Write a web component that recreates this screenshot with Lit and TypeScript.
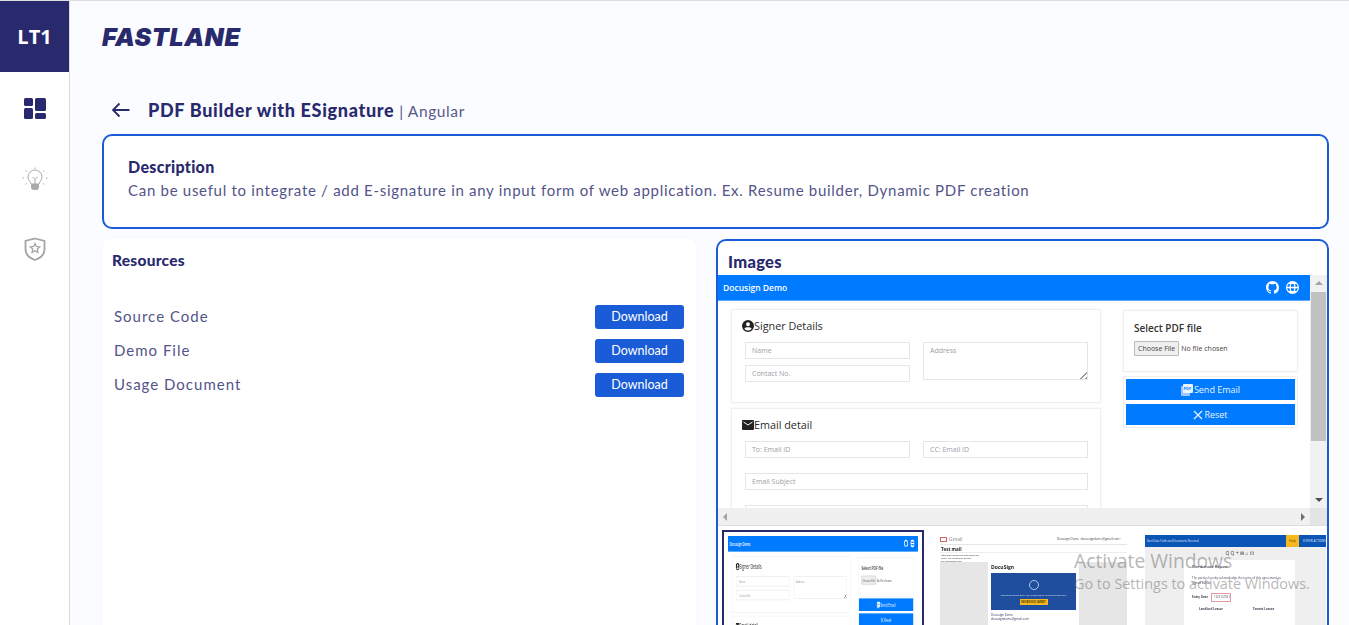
import { LitElement, css, html } from "lit";
import { customElement } from "lit/decorators.js";

const GITHUB_PATH =
  "M8 0C3.58 0 0 3.58 0 8c0 3.54 2.29 6.53 5.47 7.59.4.07.55-.17.55-.38 0-.19-.01-.82-.01-1.49-2.01.37-2.53-.49-2.69-.94-.09-.23-.48-.94-.82-1.13-.28-.15-.68-.52-.01-.53.63-.01 1.08.58 1.23.82.72 1.21 1.87.87 2.33.66.07-.52.28-.87.51-1.07-1.78-.2-3.64-.89-3.64-3.95 0-.87.31-1.59.82-2.15-.08-.2-.36-1.02.08-2.12 0 0 .67-.21 2.2.82.64-.18 1.32-.27 2-.27.68 0 1.36.09 2 .27 1.53-1.04 2.2-.82 2.2-.82.44 1.1.16 1.92.08 2.12.51.56.82 1.27.82 2.15 0 3.07-1.87 3.75-3.65 3.95.29.25.54.73.54 1.48 0 1.07-.01 1.93-.01 2.2 0 .21.15.46.55.38A8.013 8.013 0 0016 8c0-4.42-3.58-8-8-8z";

// the docusign demo page shown inside the image viewer (also used for the first thumbnail)
@customElement("demo-view")
export class DemoView extends LitElement {
  static styles = css`
    :host {
      display: block;
      width: 592px;
      background: #fff;
      font-family: "Open Sans", sans-serif;
      color: #333;
    }
    .bar {
      height: 25px;
      background: #007bff;
      border-bottom: 1px solid #5aa9ff;
      display: flex;
      align-items: center;
      justify-content: space-between;
      padding: 0 11px 0 5px;
      color: #fff;
      font-size: 8.5px;
      font-weight: 600;
    }
    .bar-icons {
      display: flex;
      gap: 7px;
    }
    .cols {
      display: grid;
      grid-template-columns: 370px 175px;
      gap: 22px;
      padding: 8px 12px 0 13px;
    }
    .stack {
      display: flex;
      flex-direction: column;
      gap: 5px;
    }
    .panel {
      border: 1px solid #efefef;
      box-shadow: 0 0 2px #f2f2f2;
      padding: 3px 13px 0 10px;
    }
    .signer {
      height: 94px;
      box-sizing: border-box;
    }
    .email {
      height: 130px;
      box-sizing: border-box;
    }
    h4 {
      margin: 0 0 4px;
      height: 25px;
      display: flex;
      align-items: center;
      gap: 0;
      font-size: 10.800px;
      font-weight: 500;
      color: #2b2b2b;
    }
    .fields {
      display: grid;
      grid-template-columns: 165px 165px;
      gap: 6px 13px;
      padding-left: 3px;
    }
    .field {
      height: 17px;
      border: 1px solid #e6e6e6;
      box-sizing: border-box;
      font-size: 7px;
      color: #9aa0a6;
      padding: 3px 6px;
      line-height: 10px;
    }
    .area {
      grid-column: 2;
      grid-row: 1 / span 2;
      height: 38px;
      background: linear-gradient(135deg, transparent 96%, #999 96%, #999 97%, transparent 97%, transparent 98.500%, #999 98.500%);
    }
    .email .fields {
      gap: 15px 13px;
    }
    .wide {
      grid-column: 1 / span 2;
    }
    .side {
      gap: 4px;
      padding-top: 1px;
    }
    .pick {
      height: 62px;
      box-sizing: border-box;
      padding: 10px 10px 0;
    }
    .pick h5 {
      margin: 0 0 6px;
      font-size: 10px;
      font-weight: 600;
    }
    .file {
      display: flex;
      align-items: center;
      gap: 2px;
      font-size: 7px;
      color: #444;
    }
    .file span:first-child {
      border: 1px solid #bbb;
      background: #efefef;
      border-radius: 1px;
      padding: 2px 3px;
    }
    .actions {
      border: 1px solid #efefef;
      padding: 2px;
      display: flex;
      flex-direction: column;
      gap: 4px;
    }
    .action {
      height: 21px;
      background: #007bff;
      color: #e9f3ff;
      font-size: 9px;
      display: flex;
      align-items: center;
      justify-content: center;
      gap: 1px;
    }
    .pdf-mark {
      font-family: "Open Sans", sans-serif;
      font-size: 4px;
      font-weight: 700;
      fill: #007bff;
    }
  `;

  render() {
    return html`
      <div class="bar">
        <span>Docusign Demo</span>
        <span class="bar-icons">
          <svg width="13" height="13" viewBox="0 0 16 16" fill="#fff"><path d=${GITHUB_PATH} /></svg>
          <svg width="13" height="13" viewBox="0 0 16 16" fill="#fff">
            <path d="M8 0a8 8 0 1 0 0 16A8 8 0 0 0 8 0zM1.600 7.200c.1-1.300.6-2.500 1.400-3.400h1.900c-.3 1-.5 2.200-.5 3.400H1.600zm0 1.600h2.800c0 1.200.2 2.400.5 3.400H3a6.400 6.400 0 0 1-1.400-3.400zM6 7.200c0-1.300.2-2.500.6-3.400h2.800c.4.900.6 2.100.6 3.400H6zm0 1.600h4c0 1.300-.2 2.500-.6 3.400H6.600c-.4-.9-.6-2.100-.6-3.400zm5.600-1.600c0-1.200-.2-2.400-.5-3.400H13c.8.900 1.300 2.100 1.400 3.400h-2.800zm0 1.600h2.800a6.400 6.400 0 0 1-1.400 3.400h-1.900c.3-1 .5-2.200.5-3.400z" />
          </svg>
        </span>
      </div>
      <div class="cols">
        <div class="stack">
          <div class="panel signer">
            <h4>
              <svg width="12" height="12" viewBox="0 0 16 16" fill="#222">
                <path d="M8 0a8 8 0 1 0 0 16A8 8 0 0 0 8 0zm0 3a2.600 2.600 0 1 1 0 5.200A2.600 2.600 0 0 1 8 3zm0 11c-2 0-3.700-.9-4.800-2.400C3.800 10.300 6 9.700 8 9.700s4.200.6 4.800 1.900C11.700 13.100 10 14 8 14z" />
              </svg>
              Signer Details
            </h4>
            <div class="fields">
              <div class="field">Name</div>
              <div class="field area">Address</div>
              <div class="field">Contact No.</div>
            </div>
          </div>
          <div class="panel email">
            <h4>
              <svg width="12" height="10" viewBox="0 0 12 10">
                <rect width="12" height="10" rx="1" fill="#222" />
                <path d="M1.500 2 6 5l4.500-3" fill="none" stroke="#fff" stroke-width="1" />
              </svg>
              Email detail
            </h4>
            <div class="fields">
              <div class="field">To: Email ID</div>
              <div class="field">CC: Email ID</div>
              <div class="field wide">Email Subject</div>
              <div class="field wide"></div>
            </div>
          </div>
        </div>
        <div class="stack side">
          <div class="panel pick">
            <h5>Select PDF file</h5>
            <div class="file"><span>Choose File</span><span>No file chosen</span></div>
          </div>
          <div class="actions">
            <div class="action">
              <svg width="12" height="12" viewBox="0 0 12 12">
                <rect x="0" y="2" width="9" height="10" rx="1" fill="#9cc8ff" />
                <rect x="2" y="0" width="10" height="9" rx="1" fill="#e9f3ff" />
                <text class="pdf-mark" x="2.600" y="6">PDF</text>
              </svg>
              Send Email
            </div>
            <div class="action">
              <svg width="10" height="10" viewBox="0 0 10 10" stroke="#e9f3ff" stroke-width="1.200">
                <path d="M1 1l8 8M9 1l-8 8" />
              </svg>
              Reset
            </div>
          </div>
        </div>
      </div>
    `;
  }
}

@customElement("app-root")
export class AppRoot extends LitElement {
  static styles = css`
    :host {
      display: block;
      height: 625px;
      overflow: hidden;
      position: relative;
      background: #fbfcff;
      font-family: Lato, "Open Sans", sans-serif;
      color: #29296e;
      box-sizing: border-box;
      border-top: 1px solid #dedede;
    }
    .shell {
      display: flex;
      height: 100%;
    }
    .rail {
      flex: 0 0 70px;
      box-sizing: border-box;
      background: #fff;
      border-right: 1px solid #d9d9d9;
      display: flex;
      flex-direction: column;
      align-items: center;
    }
    .brand {
      align-self: stretch;
      height: 71px;
      background: #29296e;
      color: #fff;
      font-family: "Open Sans", sans-serif;
      font-size: 20px;
      font-weight: 700;
      display: flex;
      align-items: center;
      justify-content: center;
    }
    .rail-icons {
      display: flex;
      flex-direction: column;
      align-items: center;
      gap: 48px;
      padding-top: 26px;
    }
    .shield {
      margin-top: -4px;
    }
    .main {
      flex: 1;
      min-width: 0;
      padding: 0 20px 0 32px;
    }
    .logo {
      height: 71px;
      box-sizing: border-box;
      padding-top: 2px;
      display: flex;
      align-items: center;
      font-family: Inter, Roboto, sans-serif;
      font-style: italic;
      font-weight: 900;
      font-size: 25px;
      letter-spacing: 0.55px;
      color: #29296e;
      margin-top: -1px;
    }
    .title-row {
      display: flex;
      align-items: center;
      gap: 17px;
      height: 63px;
      padding: 15px 0 0 9px;
      box-sizing: border-box;
    }
    .title {
      font-size: 18px;
      letter-spacing: 0.68px;
      font-weight: 900;
    }
    .tag {
      font-size: 15.500px;
      font-weight: 400;
      letter-spacing: 0.6px;
      color: #5a5a88;
    }
    .desc {
      height: 95px;
      box-sizing: border-box;
      border: 2px solid #1a5cd7;
      border-radius: 10px;
      background: #fff;
      padding: 21px 24px;
    }
    .desc h3 {
      margin: 0 0 4px;
      font-size: 16px;
      line-height: 20px;
      font-weight: 900;
      letter-spacing: 0.3px;
    }
    .desc p {
      margin: 0;
      font-size: 15px;
      line-height: 19px;
      letter-spacing: 0.71px;
      color: #54548a;
    }
    .cols {
      display: grid;
      grid-template-columns: 594px 613px;
      gap: 20px;
      margin-top: 9px;
    }
    .card {
      background: #fff;
      border-radius: 10px;
      box-shadow: 0 0 3px #f4f6fb;
      height: 500px;
      padding: 12px 12px 0 10px;
      box-sizing: border-box;
    }
    .card h3 {
      margin: 0 0 30px;
      font-size: 15.500px;
      line-height: 20px;
      font-weight: 900;
      letter-spacing: 0.25px;
    }
    .row {
      display: flex;
      align-items: center;
      justify-content: space-between;
      height: 34px;
      padding-left: 2px;
      font-size: 15px;
      letter-spacing: 1px;
      color: #54548a;
    }
    .row span {
      padding-bottom: 2px;
    }
    .download {
      width: 89px;
      height: 24px;
      border: 0;
      border-radius: 3px;
      background: #1a5cd7;
      color: #fff;
      font-family: inherit;
      font-size: 12.500px;
      letter-spacing: 0;
      padding: 0 0 1px;
    }
    .images {
      margin-top: 1px;
      height: 500px;
      box-sizing: border-box;
      border: 2px solid #1a5cd7;
      border-radius: 10px;
      background: #fff;
      overflow: hidden;
    }
    .images h3 {
      margin: 0;
      padding: 10px 10px 0;
      height: 34px;
      box-sizing: border-box;
      font-size: 16.500px;
      line-height: 22px;
      font-weight: 900;
      letter-spacing: 0.3px;
    }
    .viewer {
      display: grid;
      grid-template-columns: 592px 17px;
      grid-template-rows: 233px 17px;
      border-bottom: 1px solid #dedede;
    }
    .shot {
      overflow: hidden;
    }
    .vbar {
      background: #f1f1f1;
      display: flex;
      flex-direction: column;
      align-items: center;
      justify-content: space-between;
      position: relative;
    }
    .vthumb {
      position: absolute;
      top: 17px;
      left: 1px;
      width: 15px;
      height: 149px;
      background: #c1c1c1;
    }
    .hbar {
      background: #f0f0f0;
      display: flex;
      align-items: center;
      justify-content: space-between;
      padding: 0 5px;
    }
    .corner {
      background: #e4e4e4;
    }
    .arrow {
      width: 0;
      height: 0;
      border: 4px solid transparent;
    }
    .up {
      border-bottom-color: #a3a3a3;
      border-top-width: 0;
      margin-top: 6px;
    }
    .down {
      border-top-color: #505050;
      border-bottom-width: 0;
      margin-bottom: 6px;
    }
    .left {
      border-right-color: #a3a3a3;
      border-left-width: 0;
    }
    .right {
      border-left-color: #707070;
      border-right-width: 0;
    }
    .thumbs {
      display: grid;
      grid-template-columns: 202px 188px 184px;
      column-gap: 15px;
      padding: 4px 0 0 4px;
      height: 110px;
    }
    .thumb {
      height: 110px;
      overflow: hidden;
      box-sizing: border-box;
      filter: blur(0.5px);
    }
    .thumb.active {
      border: 2px solid #29296e;
      padding: 4px;
      filter: none;
    }
    /* the thumbnail image is squeezed, not scaled evenly */
    .thumb.active demo-view {
      transform: scale(0.321, 0.6);
      transform-origin: 0 0;
      filter: blur(0.7px);
    }
    .gm {
      padding: 4px 0 0 1px;
      font-family: "Open Sans", sans-serif;
      color: #444;
      background: #fff;
    }
    .gm-head {
      display: flex;
      justify-content: space-between;
      align-items: center;
      font-size: 3px;
      padding: 0 6px 0 0;
      border-bottom: 1px solid #e6e6e6;
      height: 10px;
    }
    .gm-logo {
      display: flex;
      align-items: center;
      gap: 2px;
      font-size: 5px;
      color: #888;
    }
    .gm-logo i {
      width: 7px;
      height: 5px;
      border: 1px solid #d9655b;
      box-sizing: border-box;
    }
    .gm-sub {
      font-size: 4.500px;
      font-weight: 700;
      padding: 2px 1px 0;
      line-height: 5px;
      color: #222;
    }
    .gm-meta {
      font-size: 2.500px;
      line-height: 3px;
      padding: 1px 1px 0;
      border-top: 1px solid #eee;
      height: 10px;
      box-sizing: border-box;
      overflow: hidden;
      color: #333;
    }
    .gm-body {
      background: #e6e6e6;
      height: 70px;
      padding: 0 48px;
    }
    .gm-mail {
      background: #fff;
      height: 70px;
      padding: 2px 3px;
      font-size: 5px;
      line-height: 7px;
      font-weight: 700;
      color: #222;
    }
    .gm-box {
      height: 37px;
      margin-top: 2px;
      background: #1f4e9f;
      display: flex;
      flex-direction: column;
      align-items: center;
      justify-content: flex-end;
      gap: 2px;
      padding-bottom: 5px;
      box-sizing: border-box;
      color: #dfe8f6;
      font-size: 2.500px;
      line-height: 3px;
      font-weight: 400;
    }
    .gm-ring {
      width: 10px;
      height: 10px;
      margin-bottom: 2px;
      border-radius: 50%;
      border: 1px solid #b8c9e6;
      box-sizing: border-box;
    }
    .gm-btn {
      width: 28px;
      height: 6px;
      background: #f5b81e;
      color: #4a3b00;
      font-size: 2.500px;
      line-height: 6px;
      text-align: center;
      font-weight: 700;
    }
    .gm-foot {
      font-size: 3px;
      line-height: 4px;
      padding-top: 3px;
      color: #335;
      font-weight: 400;
    }
    .pdf {
      margin-top: 5px;
      margin-left: 3px;
      background: #efefef;
      height: 105px;
      font-family: "Open Sans", sans-serif;
    }
    .pdf-head {
      height: 12px;
      background: #0b55b7;
      color: #dce8f8;
      font-size: 2.600px;
      display: flex;
      align-items: center;
      justify-content: space-between;
      padding-left: 2px;
    }
    .pdf-head b {
      display: flex;
      align-items: center;
      gap: 4px;
      height: 100%;
      font-weight: 400;
      font-size: 3px;
    }
    .pdf-head em {
      background: #f5b81e;
      color: #4a3b00;
      width: 13px;
      height: 100%;
      text-align: center;
      line-height: 12px;
      font-style: normal;
    }
    .pdf-tools {
      height: 13px;
      text-align: center;
      font-size: 5px;
      line-height: 13px;
      color: #444;
      padding-left: 8px;
    }
    .pdf-page {
      margin-left: 39px;
      width: 111px;
      height: 80px;
      background: #fff;
      padding: 4px 8px;
      box-sizing: border-box;
      font-size: 3px;
      line-height: 5px;
      color: #445;
    }
    .pdf-page h6 {
      margin: 0 0 7px;
      font-size: 4px;
      line-height: 5px;
      font-weight: 600;
    }
    .pdf-date {
      display: flex;
      align-items: center;
      gap: 3px;
      margin-top: 7px;
      font-weight: 700;
    }
    .pdf-date span {
      border: 1px solid #e39aa2;
      padding: 1px 2px;
      width: 14px;
      font-weight: 400;
    }
    .pdf-names {
      display: flex;
      gap: 30px;
      margin: 5px 0 0 7px;
      font-weight: 700;
    }
    .activate {
      position: absolute;
      left: 1074px;
      top: 548px;
      font-family: "Open Sans", sans-serif;
      color: rgba(110, 110, 110, 0.5);
      pointer-events: none;
    }
    .activate div:first-child {
      font-size: 19.300px;
      line-height: 24px;
    }
    .activate div:last-child {
      font-size: 14.400px;
      line-height: 22px;
    }
  `;

  private resources = ["Source Code", "Demo File", "Usage Document"];

  render() {
    return html`
      <div class="shell">
        <nav class="rail">
          <div class="brand">LT1</div>
          <div class="rail-icons">
            <svg width="22" height="21" viewBox="0 0 22 21" fill="#29296e">
              <rect x="0" y="0" width="9" height="8" rx="1.500" />
              <rect x="0" y="10" width="9" height="11" rx="1.500" />
              <rect x="11" y="0" width="11" height="13" rx="1.500" />
              <rect x="11" y="15" width="11" height="6" rx="1.500" />
            </svg>
            <svg width="26" height="26" viewBox="0 0 26 26" fill="none" stroke="#a9a9a9" stroke-width="1">
              <path d="M9 17c0-2-3-3.500-3-7a7 7 0 0 1 14 0c0 3.500-3 5-3 7z" />
              <path d="M10.500 10l2.500 2.500 2.500-2.500M13 12.500V17" />
              <path d="M9.500 17.500h7v3a2 2 0 0 1-2 2h-3a2 2 0 0 1-2-2z" fill="#a9a9a9" />
              <path d="M13 .5v1.500M3.500 3.500l1.200 1.200M22.500 3.500l-1.200 1.200M.5 11H2M24 11h1.500M3.500 17.500l1.200-1.200M22.500 17.500l-1.200-1.200" />
            </svg>
            <svg class="shield" width="22" height="24" viewBox="0 0 22 24" fill="none">
              <path d="M11 1.500 20.500 4v8.500c0 5-4 8.500-9.500 10.500C5.500 21 1.500 17.500 1.500 12.500V4z" stroke="#a4a4a4" stroke-width="1.800" />
              <path d="M11 6.500l1.400 3 3.300.4-2.400 2.200.6 3.300-2.900-1.600-2.900 1.600.6-3.300-2.400-2.200 3.300-.4z" stroke="#a4a4a4" stroke-width="1.300" />
            </svg>
          </div>
        </nav>
        <main class="main">
          <div class="logo">FASTLANE</div>
          <div class="title-row">
            <svg width="20" height="16" viewBox="0 0 20 16" fill="none" stroke="#29296e" stroke-width="1.800">
              <path d="M18.500 8H2M8.500 1.500 2 8l6.500 6.500" />
            </svg>
            <div class="title">PDF Builder with ESignature <span class="tag">| Angular</span></div>
          </div>
          <section class="desc">
            <h3>Description</h3>
            <p>Can be useful to integrate / add E-signature in any input form of web application. Ex. Resume builder, Dynamic PDF creation</p>
          </section>
          <div class="cols">
            <section class="card">
              <h3>Resources</h3>
              ${this.resources.map(
                (name) => html`
                  <div class="row">
                    <span>${name}</span>
                    <button class="download">Download</button>
                  </div>
                `
              )}
            </section>
            <section class="images">
              <h3>Images</h3>
              <div class="viewer">
                <div class="shot"><demo-view></demo-view></div>
                <div class="vbar">
                  <i class="arrow up"></i>
                  <div class="vthumb"></div>
                  <i class="arrow down"></i>
                </div>
                <div class="hbar"><i class="arrow left"></i><i class="arrow right"></i></div>
                <div class="corner"></div>
              </div>
              <div class="thumbs">
                <div class="thumb active"><demo-view></demo-view></div>
                <div class="thumb">
                  <div class="gm">
                    <div class="gm-head">
                      <span class="gm-logo"><i></i>Gmail</span>
                      <span>Docusign Demo &lt;docusigndemo@gmail.com&gt;</span>
                    </div>
                    <div class="gm-sub">Test mail</div>
                    <div class="gm-meta">Docusign Demo via docusign.net<br />Reply-To: Docusign Demo<br />To: Docusign User</div>
                    <div class="gm-body">
                      <div class="gm-mail">
                        DocuSign
                        <div class="gm-box">
                          <div class="gm-ring"></div>
                          <span>Docusign Demo sent you a document to review and sign</span>
                          <div class="gm-btn">REVIEW DOCUMENT</div>
                        </div>
                        <div class="gm-foot">Docusign Demo<br />docusigndemo@gmail.com</div>
                      </div>
                    </div>
                  </div>
                </div>
                <div class="thumb">
                  <div class="pdf">
                    <div class="pdf-head">
                      <span>Start Date: Fields and Documents Received</span>
                      <b><em>Help</em>OTHER ACTIONS</b>
                    </div>
                    <div class="pdf-tools">Q Q + ⊞ ⌂ ⊡</div>
                    <div class="pdf-page">
                      <h6>Checkmate Report</h6>
                      <div>The parties hereby acknowledge the terms of this agreement as signed below.</div>
                      <div class="pdf-date">Entry Date <span>12/31/2021</span></div>
                      <div class="pdf-names"><span>Landlord Lessor</span><span>Tenant Lessee</span></div>
                    </div>
                  </div>
                </div>
              </div>
            </section>
          </div>
        </main>
      </div>
      <div class="activate">
        <div>Activate Windows</div>
        <div>Go to Settings to activate Windows.</div>
      </div>
    `;
  }
}
